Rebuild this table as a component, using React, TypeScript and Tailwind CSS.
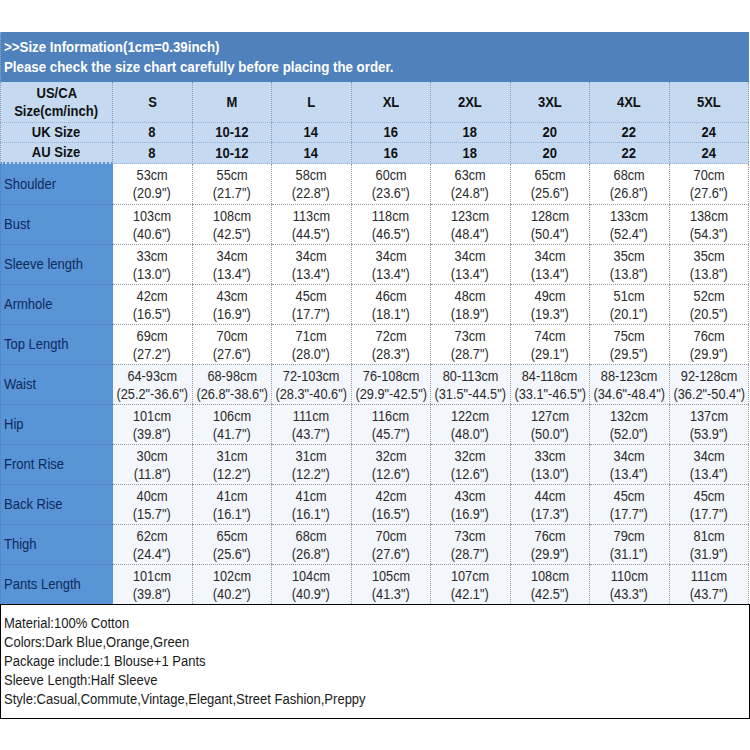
import React from "react";

const sizes = ["S", "M", "L", "XL", "2XL", "3XL", "4XL", "5XL"];
const uk = ["8", "10-12", "14", "16", "18", "20", "22", "24"];

const rows: [string, string[]][] = [
  ["Shoulder", ["53cm|(20.9\")", "55cm|(21.7\")", "58cm|(22.8\")", "60cm|(23.6\")", "63cm|(24.8\")", "65cm|(25.6\")", "68cm|(26.8\")", "70cm|(27.6\")"]],
  ["Bust", ["103cm|(40.6\")", "108cm|(42.5\")", "113cm|(44.5\")", "118cm|(46.5\")", "123cm|(48.4\")", "128cm|(50.4\")", "133cm|(52.4\")", "138cm|(54.3\")"]],
  ["Sleeve length", ["33cm|(13.0\")", "34cm|(13.4\")", "34cm|(13.4\")", "34cm|(13.4\")", "34cm|(13.4\")", "34cm|(13.4\")", "35cm|(13.8\")", "35cm|(13.8\")"]],
  ["Armhole", ["42cm|(16.5\")", "43cm|(16.9\")", "45cm|(17.7\")", "46cm|(18.1\")", "48cm|(18.9\")", "49cm|(19.3\")", "51cm|(20.1\")", "52cm|(20.5\")"]],
  ["Top Length", ["69cm|(27.2\")", "70cm|(27.6\")", "71cm|(28.0\")", "72cm|(28.3\")", "73cm|(28.7\")", "74cm|(29.1\")", "75cm|(29.5\")", "76cm|(29.9\")"]],
  ["Waist", ["64-93cm|(25.2\"-36.6\")", "68-98cm|(26.8\"-38.6\")", "72-103cm|(28.3\"-40.6\")", "76-108cm|(29.9\"-42.5\")", "80-113cm|(31.5\"-44.5\")", "84-118cm|(33.1\"-46.5\")", "88-123cm|(34.6\"-48.4\")", "92-128cm|(36.2\"-50.4\")"]],
  ["Hip", ["101cm|(39.8\")", "106cm|(41.7\")", "111cm|(43.7\")", "116cm|(45.7\")", "122cm|(48.0\")", "127cm|(50.0\")", "132cm|(52.0\")", "137cm|(53.9\")"]],
  ["Front Rise", ["30cm|(11.8\")", "31cm|(12.2\")", "31cm|(12.2\")", "32cm|(12.6\")", "32cm|(12.6\")", "33cm|(13.0\")", "34cm|(13.4\")", "34cm|(13.4\")"]],
  ["Back Rise", ["40cm|(15.7\")", "41cm|(16.1\")", "41cm|(16.1\")", "42cm|(16.5\")", "43cm|(16.9\")", "44cm|(17.3\")", "45cm|(17.7\")", "45cm|(17.7\")"]],
  ["Thigh", ["62cm|(24.4\")", "65cm|(25.6\")", "68cm|(26.8\")", "70cm|(27.6\")", "73cm|(28.7\")", "76cm|(29.9\")", "79cm|(31.1\")", "81cm|(31.9\")"]],
  ["Pants Length", ["101cm|(39.8\")", "102cm|(40.2\")", "104cm|(40.9\")", "105cm|(41.3\")", "107cm|(42.1\")", "108cm|(42.5\")", "110cm|(43.3\")", "111cm|(43.7\")"]],
];

export default function App() {
  return (
    <div
      className="w-[750px] h-[750px] bg-white pt-[32px] text-[14px]"
      style={{ fontFamily: '"Liberation Sans", Arial, sans-serif' }}
    >
      <div className="w-[749px] h-[50px] bg-[#4f81bd] text-white font-bold leading-[20px] px-[3px] flex flex-col justify-center border-l border-dotted border-[#8aa9d0]">
        <div className="origin-left scale-x-[0.95] whitespace-nowrap">&gt;&gt;Size Information(1cm=0.39inch)</div>
        <div className="origin-left scale-x-[0.95] whitespace-nowrap">Please check the size chart carefully before placing the order.</div>
      </div>
      <div className="w-[749px] grid grid-cols-[113px_repeat(8,1fr)]">
        {/* header row 1 */}
        <div className="h-[40px] bg-[#c5d9f1] font-bold text-[#111] flex flex-col items-center justify-center leading-[18px] border-r border-l border-dotted border-[#8c9bb0]">
          <div className="scale-x-[0.93] whitespace-nowrap">US/CA</div>
          <div className="scale-x-[0.93] whitespace-nowrap">Size(cm/inch)</div>
        </div>
        {sizes.map((s) => (
          <div key={s} className="h-[40px] bg-[#c5d9f1] font-bold text-[#111] flex items-center justify-center border-r border-dotted border-[#8c9bb0]">
            <div className="scale-x-[0.93]">{s}</div>
          </div>
        ))}
        {/* UK */}
        <div className="h-[20px] bg-[#c5d9f1] font-bold text-[#111] flex items-center justify-center border-l border-r border-dotted border-[#8c9bb0] border-t border-t-[#95b3d7]">
          <div className="scale-x-[0.93] whitespace-nowrap">UK Size</div>
        </div>
        {uk.map((s, i) => (
          <div key={i} className="h-[20px] bg-[#c5d9f1] font-bold text-[#111] flex items-center justify-center border-r border-dotted border-[#8c9bb0] border-t border-t-[#95b3d7]">
            <div className="scale-x-[0.93]">{s}</div>
          </div>
        ))}
        {/* AU */}
        <div className="h-[22px] bg-[#c5d9f1] font-bold text-[#111] flex items-center justify-center border-l border-r border-dotted border-[#8c9bb0] border-t border-t-[#95b3d7] border-b-2 border-b-[#5b8fd0]">
          <div className="scale-x-[0.93] whitespace-nowrap">AU Size</div>
        </div>
        {uk.map((s, i) => (
          <div key={i} className="h-[22px] bg-[#c5d9f1] font-bold text-[#111] flex items-center justify-center border-r border-dotted border-[#8c9bb0] border-t border-t-[#95b3d7] border-b border-b-[#95b3d7]">
            <div className="scale-x-[0.93]">{s}</div>
          </div>
        ))}
        {rows.map(([label, vals], ri) => (
          <React.Fragment key={label}>
            <div
              className={`h-[40px] bg-[#5894d6] text-[#0f2a5c] flex items-center pl-[3px] border-l border-dotted border-[#4a7fc0] ${ri > 0 ? "border-t" : ""}`}
            >
              <div className="origin-left scale-x-[0.93] whitespace-nowrap">{label}</div>
            </div>
            {vals.map((v, i) => {
              const [a, b] = v.split("|");
              return (
                <div
                  key={i}
                  className={`h-[40px] ${ri >= 5 ? "bg-[#f3f6fb]" : "bg-white"} text-[#2a2a2a] flex flex-col items-center justify-center leading-[18px] whitespace-nowrap border-r border-dotted border-[#9a9a9a] ${ri > 0 ? "border-t" : ""}`}
                >
                  <div className="scale-x-[0.91]">{a}</div>
                  <div className="scale-x-[0.91]">{b}</div>
                </div>
              );
            })}
          </React.Fragment>
        ))}
      </div>
      <div className="w-[750px] h-[115px] border border-black text-[#1a1a1a] pl-[3px] pt-[9px] leading-[19px]">
        {[
          "Material:100% Cotton",
          "Colors:Dark Blue,Orange,Green",
          "Package include:1 Blouse+1 Pants",
          "Sleeve Length:Half Sleeve",
          "Style:Casual,Commute,Vintage,Elegant,Street Fashion,Preppy",
        ].map((t) => (
          <div key={t} className="origin-left scale-x-[0.93] whitespace-nowrap">
            {t}
          </div>
        ))}
      </div>
    </div>
  );
}
